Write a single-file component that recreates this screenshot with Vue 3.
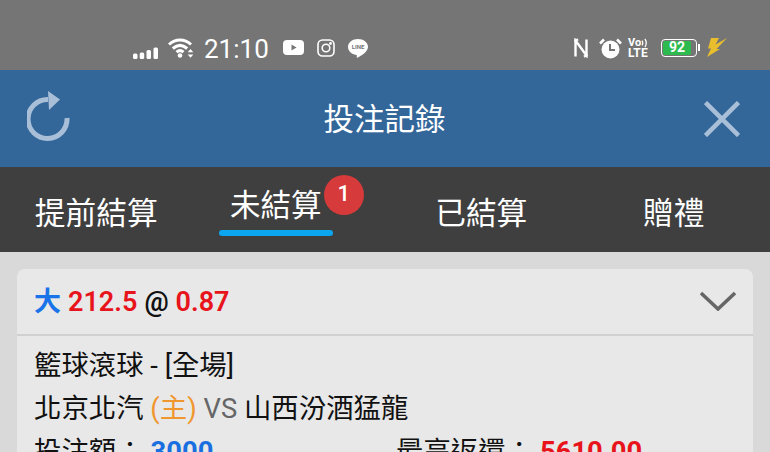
<template>
  <div class="page">
    <!-- 狀態列 -->
    <div class="status-bar">
      <div class="status-left">
        <svg class="signal" width="25" height="12" viewBox="0 0 25 12">
          <rect x="0" y="6.500" width="4.500" height="5.500" rx="1.500" />
          <rect x="6.700" y="5.500" width="4.500" height="6.500" rx="1.500" />
          <rect x="13.500" y="3" width="4.500" height="9" rx="1.500" />
          <rect x="20.500" y="0.500" width="4.500" height="11.500" rx="1.500" />
        </svg>
        <svg class="wifi" width="26" height="20" viewBox="0 0 26 20">
          <g fill="none" stroke="#fff" stroke-width="3">
            <path d="M1 6.500C7.500 .5 16.500 .5 23 6.500" />
            <path d="M4.800 10.500C9.500 6.400 14.500 6.400 19.200 10.500" />
            <path d="M8.500 14.200C10.800 12.200 13.200 12.200 15.500 14.200" />
          </g>
          <circle cx="12" cy="17.500" r="2.300" fill="#fff" />
          <path d="M22.500 11l2.800 3.300h-5.600zM22.500 19.800l2.800-3.300h-5.600z" fill="#fff" />
        </svg>
        <span class="clock">21:10</span>
        <svg class="yt" width="21" height="15" viewBox="0 0 21 15">
          <rect width="21" height="15" rx="4" fill="#fff" />
          <path d="M8.500 4.500l5 3-5 3z" fill="#757575" />
        </svg>
        <svg class="ig" width="18" height="18" viewBox="0 0 18 18" fill="none" stroke="#fff" stroke-width="1.600">
          <rect x="1" y="1" width="16" height="16" rx="4.500" />
          <circle cx="9" cy="9" r="3.800" />
          <circle cx="13.500" cy="4.500" r="0.600" fill="#fff" />
        </svg>
        <svg class="line-icon" width="20" height="21" viewBox="0 0 20 21">
          <path d="M10 0C4.500 0 0 3.500 0 8c0 4 3.500 7.300 8.300 7.900.8.200.6 1 .4 2.100-.1.700.3 1 1 .6 2.500-1.400 10.300-5.600 10.300-10.600C20 3.500 15.500 0 10 0z" fill="#fff" />
          <text x="10" y="10.300" text-anchor="middle" class="line-text">LINE</text>
        </svg>
      </div>
      <div class="status-right">
        <svg class="nfc" width="14" height="20" viewBox="0 0 14 20" fill="none" stroke="#fff" stroke-width="2.400">
          <path d="M1.500 18.500V2.500L12.500 17.500V1.500" />
          <path d="M.5 3.500L4 1.200M13.500 16.500L10 18.800" />
        </svg>
        <svg class="alarm" width="23" height="21" viewBox="0 0 23 21">
          <circle cx="11.500" cy="11.500" r="9" fill="#fff" />
          <path d="M11 6v6h5" fill="none" stroke="#757575" stroke-width="2" />
          <path d="M1 5.500L5 1.500M22 5.500L18 1.500" stroke="#fff" stroke-width="2.500" />
        </svg>
        <div class="volte">
          <div class="vo">
            <span>Vo</span>
            <svg width="7" height="10" viewBox="0 0 7 10" fill="none" stroke="#fff" stroke-width="1.300">
              <path d="M1 2.500C2 4 2 6 1 7.500M4 .8C5.800 3.500 5.800 6.500 4 9.200" />
            </svg>
          </div>
          <span class="lte">LTE</span>
        </div>
        <div class="battery">
          <div class="battery-fill">92</div>
          <span class="battery-cap"></span>
        </div>
        <svg class="bolt" width="20" height="19" viewBox="0 0 20 19">
          <path d="M4 0h8L8.500 6.500 20 0 9.500 11H13L0 19 4 10.500H1z" fill="#e8be2e" />
        </svg>
      </div>
    </div>

    <!-- 標題列 -->
    <header class="title-bar">
      <svg class="refresh" width="44" height="50" viewBox="0 0 44 50">
        <path d="M40 27A19.500 19.500 0 1 1 21 8.500" fill="none" stroke="#a9bfd8" stroke-width="5" />
        <path d="M21 0L33 8.500 22 19z" fill="#a9bfd8" />
      </svg>
      <h1 class="title">投注記錄</h1>
      <svg class="close" width="36" height="36" viewBox="0 0 36 36">
        <path d="M1.500 1.500L34.500 34.500M34.500 1.500L1.500 34.500" stroke="#a9bfd8" stroke-width="4.500" />
      </svg>
    </header>

    <!-- 分頁 -->
    <nav class="tabs">
      <div v-for="tab in tabs" :key="tab.name" class="tab">
        <div v-if="tab.active" class="tab-active">
          <span>{{ tab.name }}</span>
          <i class="underline"></i>
          <b class="badge">{{ tab.badge }}</b>
        </div>
        <span v-else>{{ tab.name }}</span>
      </div>
    </nav>

    <!-- 注單 -->
    <main class="content">
      <section class="card">
        <div class="card-head">
          <div class="bet">
            <span class="blue">大</span>
            <span class="red">212.5</span>
            <span class="at">@</span>
            <span class="red">0.87</span>
          </div>
          <svg class="chevron" width="36" height="20" viewBox="0 0 36 20">
            <path d="M1 2L18 18 35 2" fill="none" stroke="#666" stroke-width="3.500" />
          </svg>
        </div>
        <div class="card-body">
          <div class="row">籃球滾球 - [全場]</div>
          <div class="row">
            北京北汽 <span class="home">(主)</span>&nbsp;<span class="vs">VS</span>&nbsp;山西汾酒猛龍
          </div>
          <div class="row amounts">
            <div>投注額：<b class="amount">3000</b></div>
            <div>最高返還：<b class="payout">5610.00</b></div>
          </div>
        </div>
      </section>
    </main>
  </div>
</template>

<script setup>
const tabs = [
  {name: "提前結算"},
  {name: "未結算", active: true, badge: 1},
  {name: "已結算"},
  {name: "贈禮"},
];
</script>

<style>
html,
body {
  margin: 0;
  background: #d9d9d9;
}
</style>

<style scoped>
.page {
  width: 770px;
  height: 452px;
  overflow: hidden;
  font-family: Roboto, "Noto Sans CJK TC", sans-serif;
  background: #d9d9d9;
  color: #111;
}
.status-bar {
  height: 70px;
  box-sizing: border-box;
  padding: 34px 43px 0 133px;
  background: #757575;
  display: flex;
  justify-content: space-between;
  align-items: flex-start;
  color: #fff;
}
.status-left,
.status-right {
  display: flex;
  align-items: flex-start;
}
.signal {
  fill: #fff;
  margin: 13px 10px 0 0;
}
.wifi {
  margin: 4px 10px 0 0;
}
.clock {
  font-size: 26px;
  line-height: 30px;
  margin-right: 14px;
}
.yt {
  margin: 6px 13px 0 0;
}
.ig {
  margin: 5px 13px 0 0;
}
.line-icon {
  margin-top: 5px;
}
.line-text {
  font-size: 6px;
  font-weight: 700;
  fill: #757575;
}
.nfc {
  margin: 4px 11px 0 0;
}
.alarm {
  margin: 4px 6px 0 0;
}
.volte {
  width: 20px;
  margin: 3px 13px 0 0;
  font-weight: 700;
  display: flex;
  flex-direction: column;
}
.vo {
  height: 11px;
  font-size: 11px;
  line-height: 11px;
  white-space: nowrap;
  display: flex;
  align-items: center;
}
.lte {
  font-size: 12px;
  line-height: 11px;
  letter-spacing: 0.2px;
}
.battery {
  position: relative;
  width: 36px;
  height: 18px;
  box-sizing: border-box;
  margin: 5px 10px 0 0;
  padding: 1px;
  border: 1.500px solid #fff;
  border-radius: 4px;
}
.battery-fill {
  width: 28px;
  height: 100%;
  background: #2dbb4f;
  border-radius: 2px;
  text-align: center;
  font-size: 14px;
  font-weight: 700;
  line-height: 13px;
}
.battery-cap {
  position: absolute;
  right: -4px;
  top: 4px;
  width: 2px;
  height: 7px;
  background: #fff;
}
.bolt {
  margin-top: 4px;
}
.title-bar {
  height: 97px;
  box-sizing: border-box;
  padding: 0 30px 0 27px;
  background: #336699;
  display: flex;
  align-items: center;
  justify-content: space-between;
}
.refresh {
  margin-top: -6px;
}
.title {
  margin: -4px 6px 0 0;
  font-size: 30.500px;
  font-weight: 400;
  color: #fff;
}
.tabs {
  height: 85px;
  background: #3f3f3f;
  display: grid;
  grid-template-columns: repeat(4, 1fr);
  color: #fff;
  font-size: 30.700px;
}
.tab {
  display: flex;
  align-items: center;
  justify-content: center;
  padding-top: 2px;
}
.tab-active {
  position: relative;
  width: 114px;
  margin-right: 26px;
  display: flex;
  flex-direction: column;
  align-items: center;
  margin-top: -4px;
  font-size: 30.500px;
}
.underline {
  width: 114px;
  height: 6px;
  margin-top: 5px;
  border-radius: 3px;
  background: #0aa7f0;
}
.badge {
  position: absolute;
  left: 105px;
  top: -6px;
  width: 40px;
  height: 40px;
  border-radius: 50%;
  background: #d63a3a;
  font-size: 22px;
  font-weight: 500;
  line-height: 38px;
  text-align: center;
}
.content {
  padding: 17px;
}
.card {
  background: #e8e8e8;
  border-radius: 8px 8px 0 0;
}
.card-head {
  height: 67px;
  box-sizing: border-box;
  padding: 0 17px 5px 17px;
  border-bottom: 2px solid #d0d0d0;
  display: flex;
  align-items: center;
  justify-content: space-between;
}
.chevron {
  margin-top: 3px;
}
.bet {
  font-size: 27px;
  font-weight: 600;
  white-space: nowrap;
  display: flex;
  align-items: baseline;
  gap: 7px;
}
.blue {
  color: #1a73e8;
}
.red {
  color: #e8141c;
}
.at {
  color: #111;
}
.card-body {
  padding: 9px 17px 0;
  font-size: 27.400px;
}
.row {
  height: 43px;
  line-height: 43px;
  white-space: nowrap;
}
.home {
  color: #f0962e;
}
.vs {
  color: #666;
}
.amounts {
  display: grid;
  grid-template-columns: 362px 1fr;
}
.amount,
.payout {
  margin-left: 7px;
  font-weight: 700;
}
.amount {
  color: #1a6fe0;
}
.payout {
  color: #e8141c;
}
</style>
